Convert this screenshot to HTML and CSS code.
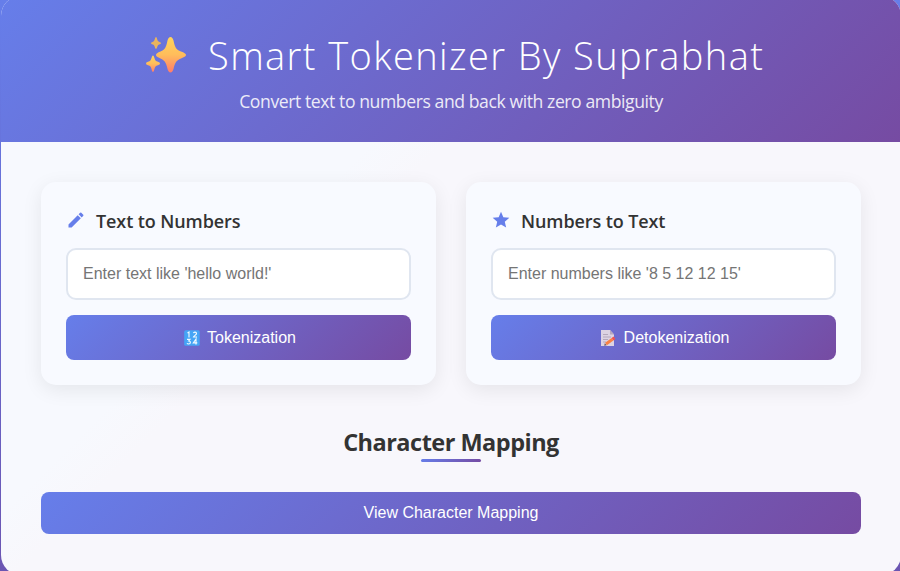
FILE: index.html
```
<!DOCTYPE html>
<html lang="en">
<head>
<meta charset="utf-8">
<title>Smart Tokenizer</title>
<link rel="stylesheet" href="styles.css">
</head>
<body>
<main class="container">
  <header class="header">
    <h1 class="title">
      <svg class="sparkles" viewBox="0 0 42 38" aria-hidden="true">
        <defs><linearGradient id="gold" x1="0" y1="0" x2="0" y2="1"><stop offset="0" stop-color="#ffd45c"/><stop offset=".5" stop-color="#ffbd5b"/><stop offset="1" stop-color="#ff7b6b"/></linearGradient></defs>
        <g fill="url(#gold)">
          <path d="M25.500 1C27 1 27.800 2.300 28.500 4.500C30 11.500 31 13.500 36 15.500C39 16.700 41 17.500 41 19S39 21.200 36 22.400C31 24.500 30 26.500 28.500 33C27.800 35.300 27 36.500 25.500 36.500S23.200 35.300 22.500 33C21 26.500 20 24.500 15.500 22.400C12.500 21.200 11 20.500 11 19S12.500 16.700 15.500 15.500C20 13.500 21 11.500 22.500 4.500C23.200 2.300 24 1 25.500 1Z"/>
          <path d="M8 19.500C9.300 19.500 9.300 23.500 11 25C12.500 26 15 26 15 27.500S12.500 29 11 30C9.300 31.500 9.300 36 8 36S6.700 31.500 5 30C3.500 29 1 29 1 27.500S3.500 26 5 25C6.700 23.500 6.700 19.500 8 19.500Z"/>
        </g>
        <path fill="#e9b45e" d="M11 1C12 1 12 4 13.200 5.300C14.200 6.200 16 6.200 16 7.200S14.200 8.200 13.200 9C12 10.300 12 13 11 13S10 10.300 8.800 9C7.800 8.200 6 8.200 6 7.200S7.800 6.200 8.800 5.300C10 4 10 1 11 1Z"/>
      </svg>
      <span class="title-text">Smart Tokenizer By Suprabhat</span>
    </h1>
    <p class="subtitle">Convert text to numbers and back with zero ambiguity</p>
  </header>

  <div class="content">
    <div class="cards">
      <section class="card">
        <h2 class="card-title">
          <svg class="icon" viewBox="0 0 24 24" aria-hidden="true"><path d="M3 17.250V21h3.750L17.810 9.940l-3.750-3.750L3 17.250zM20.710 7.040a1 1 0 0 0 0-1.410l-2.340-2.340a1 1 0 0 0-1.410 0l-1.830 1.830 3.750 3.750 1.830-1.830z"/></svg>
          <span>Text to Numbers</span>
        </h2>
        <input class="field" type="text" placeholder="Enter text like 'hello world!'">
        <button class="btn btn-action">
          <svg class="emoji" viewBox="0 0 16 16" aria-hidden="true"><rect width="15.500" height="15.500" x=".2" y=".2" rx="1.500" fill="#45a5f5"/><g fill="none" stroke="#f2faff" stroke-width="1.150"><path d="M3.500 3l1.500-1v5.500M9.500 3.200C9.700 1.700 12.500 1.700 12.500 3.500C12.500 5 10 5.500 9.500 7H13M3 9.300h3L4.700 11C7 11 6.800 14 4.700 14C3.800 14 3.200 13.600 3 13.200M12 14.500V9L9.300 12.800H13.300"/></g></svg>
          <span>Tokenization</span>
        </button>
      </section>
      <section class="card">
        <h2 class="card-title">
          <svg class="icon" viewBox="0 0 24 24" aria-hidden="true"><path d="M12 17.270L18.180 21l-1.640-7.030L22 9.240l-7.190-.61L12 2 9.190 8.630 2 9.240l5.460 4.730L5.820 21z"/></svg>
          <span>Numbers to Text</span>
        </h2>
        <input class="field" type="text" placeholder="Enter numbers like '8 5 12 12 15'">
        <button class="btn btn-action">
          <svg class="emoji" viewBox="0 0 16 16" aria-hidden="true"><path fill="#ddd3e3" d="M0 0h9l4 4.500V16H0z"/><path fill="#b6a8bf" d="M9 0v4.500h4z"/><path stroke="#b5a8bc" d="M2 4.500h5M2 7h8M2 9.500h5M2 12h3"/><path stroke="#f98145" stroke-width="3" d="M5 14L11.500 9.200"/><path stroke="#f05252" stroke-width="3" d="M11.500 9.200l2-1.500"/><path fill="#65505c" d="M3.200 15.800l.6-2.500 1.800 1.900z"/></svg>
          <span>Detokenization</span>
        </button>
      </section>
    </div>

    <section class="mapping">
      <h2 class="mapping-title"><span>Character Mapping</span></h2>
      <button class="btn btn-wide">View Character Mapping</button>
    </section>
  </div>
</main>
</body>
</html>
```
FILE: styles.css
```
* { box-sizing: border-box; margin: 0; padding: 0; }

html { height: 571px; overflow: hidden; }

body {
  height: 571px;
  overflow: hidden;
  background: linear-gradient(180deg, #667eea 0%, #6b55b2 100%);
  font-family: "Open Sans", "Noto Sans", sans-serif;
  color: #333;
}

.container {
  width: 900px;
  height: 579px;
  margin: -4px 0 0 1px;
  border-radius: 20px;
  overflow: hidden;
  background: linear-gradient(135deg, #f7f9fe 0%, #f7f9fe 35%, #f8f7fc 40%, #f8f7fc 100%);
}

.header {
  height: 146px;
  padding-top: 34px;
  background: linear-gradient(135deg, #667eea 0%, #764ba2 100%);
  color: #fff;
  text-align: center;
}

.title {
  display: flex;
  align-items: center;
  gap: 21px;
  height: 53px;
  padding-left: 144px;
  font-size: 38px;
  font-weight: 300;
  line-height: 53px;
  letter-spacing: 1.4px;
  white-space: nowrap;
}

.title-text { margin-top: -3px; }

.sparkles { flex: none; width: 42px; height: 38px; margin-top: -3px; }

.subtitle {
  margin-top: 6px;
  font-size: 17.6px;
  line-height: 24px;
  letter-spacing: -.42px;
  opacity: .87;
}

.content { padding: 40px; }

.cards { display: grid; grid-template-columns: 1fr 1fr; gap: 30px; }

.card {
  height: 203px;
  padding: 25px;
  border-radius: 15px;
  background: #f8faff;
  box-shadow: 0 5px 20px rgba(0, 0, 0, .08);
}

.card-title {
  display: flex;
  align-items: center;
  gap: 10px;
  height: 26px;
  margin-bottom: 15px;
  padding-top: 2px;
  font-size: 18px;
  font-weight: 600;
  line-height: 26px;
  letter-spacing: -.1px;
  white-space: nowrap;
}

.icon { width: 20px; height: 20px; margin-top: -3px; fill: #667eea; }

.field {
  display: block;
  width: 100%;
  height: 52px;
  padding: 0 15px;
  border: 2px solid #e0e6f0;
  border-radius: 10px;
  background: #fff;
  font: 16px "Liberation Sans", Arial, sans-serif;
}

.field::placeholder { color: #757575; }

.btn {
  display: flex;
  align-items: center;
  justify-content: center;
  width: 100%;
  height: 45px;
  margin-top: 15px;
  border: 0;
  border-radius: 8px;
  background: linear-gradient(135deg, #667eea 0%, #764ba2 100%);
  color: #fff;
  font: 16px "Liberation Sans", Arial, sans-serif;
}

.btn-action { gap: 7px; padding: 1px 0 0 3px; }

.emoji { width: 16px; height: 16px; }

.mapping { margin-top: 41px; }

.mapping-title {
  display: flex;
  flex-direction: column;
  align-items: center;
  height: 36px;
  font-size: 23.5px;
  font-weight: 700;
  line-height: 33px;
  letter-spacing: -.51px;
}

.mapping-title::after {
  content: "";
  width: 60px;
  height: 3px;
  border-radius: 2px;
  background: linear-gradient(135deg, #667eea 0%, #764ba2 100%);
}

.btn-wide { height: 42px; margin-top: 30px; }
```
